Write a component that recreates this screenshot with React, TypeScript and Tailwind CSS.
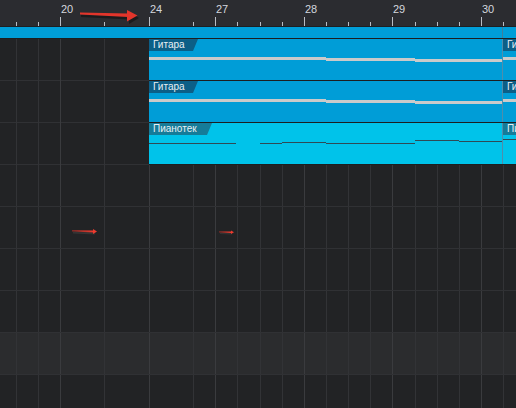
import React from "react";

const GRID = [16, 38, 60, 104, 149, 193, 215, 237, 260, 282, 304, 326, 348, 370, 392, 415, 437, 459, 481, 503];
const BARS: Record<number, string> = { 60: "20", 149: "24", 215: "27", 304: "28", 392: "29", 481: "30" };

function GridLines() {
  return (
    <>
      {GRID.map((x) => (
        <div
          key={x}
          className={`absolute top-0 bottom-0 w-px ${BARS[x] ? "bg-[#3a3b3e]" : "bg-[#323336]"}`}
          style={{ left: x }}
        />
      ))}
    </>
  );
}

function Tab({ label, width, color }: { label: string; width: string; color: string }) {
  return (
    <div
      className={`h-[12px] ${width} ${color} pl-[4px] text-[10px] leading-[12px] text-[#e9f0f4] whitespace-nowrap overflow-hidden [clip-path:polygon(0_0,100%_0,calc(100%-5px)_100%,0_100%)]`}
    >
      {label}
    </div>
  );
}

type Seg = [number, number, number];

function Clip({
  label,
  tabW,
  tabColor,
  bg,
  segs,
  lineColor,
  lineH,
  width,
}: {
  label: string;
  tabW: string;
  tabColor: string;
  bg: string;
  segs: Seg[];
  lineColor: string;
  lineH: number;
  width: string;
}) {
  return (
    <div className={`relative h-full overflow-hidden ${bg} ${width}`}>
      <svg className="absolute inset-0 w-full h-full" preserveAspectRatio="none">
        {segs.map(([x1, x2, y], i) => (
          <rect key={i} x={x1} y={y} width={x2 - x1} height={lineH} fill={lineColor} />
        ))}
      </svg>
      <div className="relative">
        <Tab label={label} width={tabW} color={tabColor} />
      </div>
    </div>
  );
}

function ClipRow({ kind }: { kind: "g" | "p" }) {
  const isG = kind === "g";
  const bg = isG ? "bg-[#009dd7]" : "bg-[#00c3ea]";
  const tabColor = isG ? "bg-[#0c5f87]" : "bg-[#157c99]";
  const label = isG ? "Гитара" : "Пианотек";
  const tabW = isG ? "w-[49px]" : "w-[63px]";
  const segs1: Seg[] = isG
    ? [
        [0, 177, 18],
        [177, 266, 19],
        [266, 353, 20],
      ]
    : [
        [0, 87, 20],
        [111, 133, 20],
        [133, 177, 19],
        [177, 266, 20],
        [266, 310, 17],
        [310, 353, 18],
      ];
  const segs2: Seg[] = isG ? [[0, 20, 18]] : [[0, 20, 16]];
  const lineColor = isG ? "#cacaca" : "#2f4a55";
  const lineH = isG ? 3 : 1;
  return (
    <div className="relative flex h-[42px]">
      <GridLines />
      <div className="w-[149px] shrink-0 border-b border-[#303134]" />
      <div className="relative flex flex-1 border-b border-[#1d1e20]">
        <Clip label={label} tabW={tabW} tabColor={tabColor} bg={bg} segs={segs1} lineColor={lineColor} lineH={lineH} width="w-[353px] shrink-0" />
        <div className="w-px h-full bg-[#4f8dab]" />
        <Clip label={label} tabW={tabW} tabColor={tabColor} bg={bg} segs={segs2} lineColor={lineColor} lineH={lineH} width="flex-1" />
      </div>
    </div>
  );
}

function EmptyRow({ light }: { light?: boolean }) {
  return (
    <div className={`relative h-[42px] shrink-0 border-b border-[#303134] ${light ? "bg-[#2b2c2e]" : ""}`}>
      <GridLines />
    </div>
  );
}

export default function App() {
  return (
    <div className="relative w-[516px] h-[408px] overflow-hidden bg-[#222325] font-['Liberation_Sans',Arial,sans-serif]">
      {/* Ruler */}
      <div className="relative h-[26px] bg-[#2b2c30] border-b border-[#1e1f22] box-content">
        {GRID.map((x) => (
          <div
            key={x}
            className={`absolute bottom-0 w-px bg-[#b9bdc4] ${BARS[x] ? "h-[9px]" : "h-[4px]"}`}
            style={{ left: x }}
          />
        ))}
        {Object.entries(BARS).map(([x, t]) => (
          <span
            key={x}
            className="absolute top-[3px] text-[11px] leading-[13px] text-[#d3d7de]"
            style={{ left: Number(x) + 1 }}
          >
            {t}
          </span>
        ))}
      </div>
      {/* Loop bar */}
      <div className="flex h-[11px] bg-[#009ed8] border-b border-[#1d1e20] box-content">
        <div className="w-[502px] shrink-0" />
        <div className="w-px h-full bg-[#3f7f9c]" />
      </div>
      {/* Tracks */}
      <div className="flex flex-col">
        <ClipRow kind="g" />
        <ClipRow kind="g" />
        <ClipRow kind="p" />
        <EmptyRow />
        <EmptyRow />
        <EmptyRow />
        <EmptyRow />
        <EmptyRow light />
        <EmptyRow />
      </div>
      {/* Annotation arrows */}
      <svg className="absolute inset-0 pointer-events-none" width="516" height="408">
        <defs>
          <linearGradient id="ag" x1="0" x2="1" y1="0" y2="0">
            <stop offset="0" stopColor="#7a2a26" />
            <stop offset="1" stopColor="#ee3b2f" />
          </linearGradient>
        </defs>
        {/* ruler arrow shadow */}
        <polygon points="81,15 129,16 129,19.5 81,17" fill="#111" opacity="0.6" />
        <polygon points="129,12 139,18 129,24" fill="#111" opacity="0.6" />
        {/* ruler arrow */}
        <polygon points="80,12.5 128,13.5 128,17 80,14.5" fill="#e2352b" />
        <polygon points="127,10 137.5,15.5 127,21.5" fill="#e2352b" />
        {/* track arrow 1 */}
        <polygon points="73,232 95,232.5 95,234.5 73,233.5" fill="#3a3a3a" opacity="0.8" />
        <polygon points="72,230 94,230.5 94,232.5 72,231.5" fill="url(#ag)" />
        <polygon points="93,229 97,231.5 93,234" fill="#ee3b2f" />
        {/* track arrow 2 */}
        <polygon points="220,233 232,233.2 232,234.5 220,234" fill="#3a3a3a" opacity="0.8" />
        <polygon points="219,231.3 231,231.6 231,233 219,232.5" fill="url(#ag)" />
        <polygon points="231,230.5 234,232.3 231,234" fill="#ee3b2f" />
      </svg>
    </div>
  );
}
